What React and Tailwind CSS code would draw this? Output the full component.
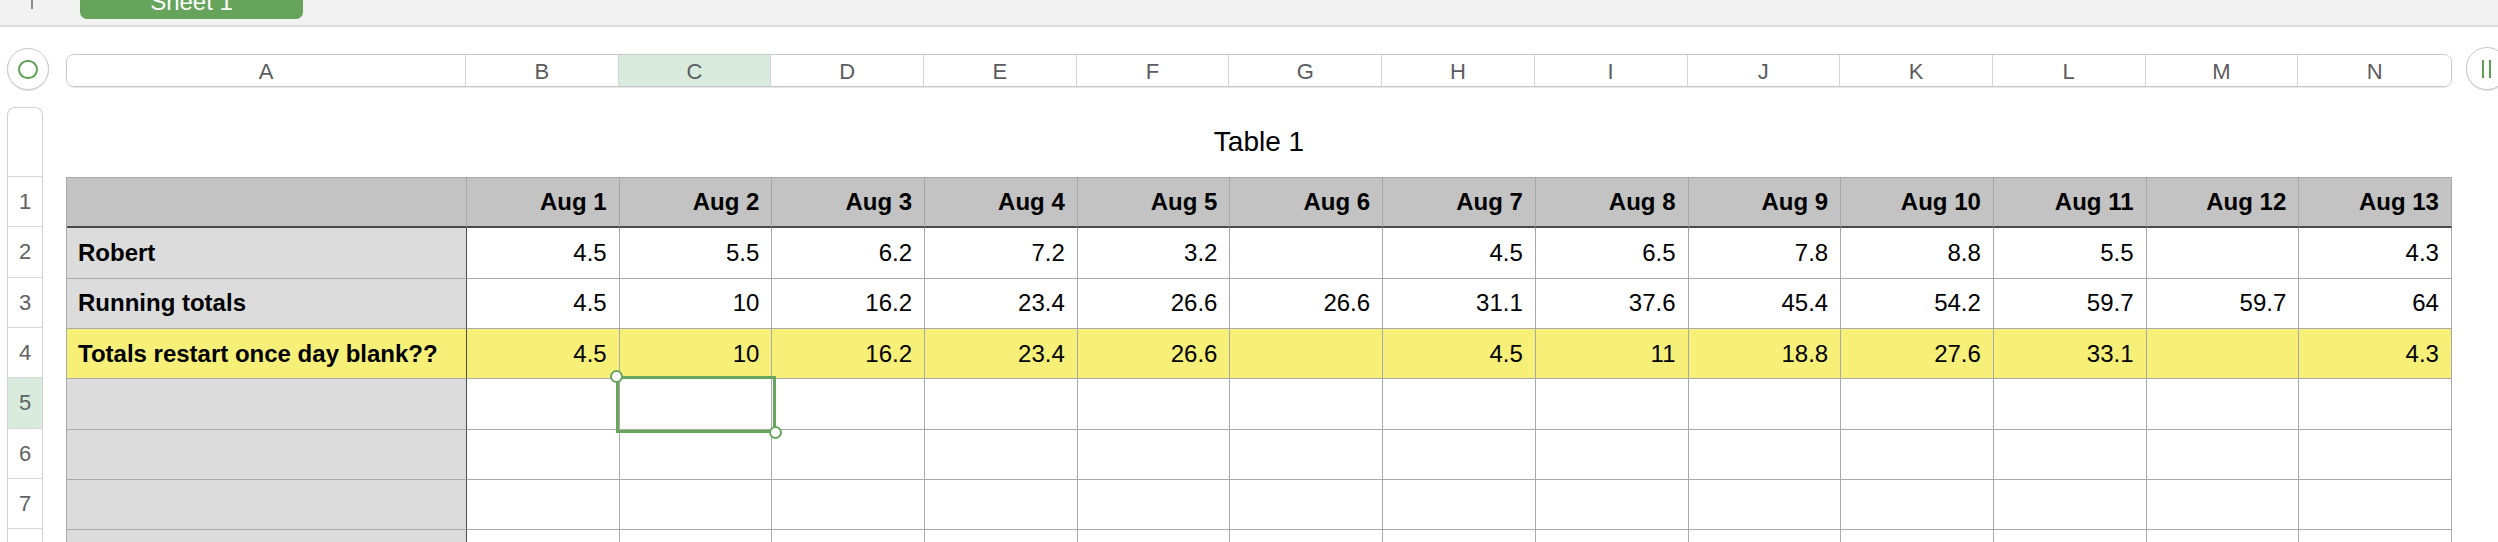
import React from "react";

const cols = ["A", "B", "C", "D", "E", "F", "G", "H", "I", "J", "K", "L", "M", "N"];
const days = Array.from({ length: 13 }, (_, i) => `Aug ${i + 1}`);

const rows = [
  { label: "Robert", values: ["4.5", "5.5", "6.2", "7.2", "3.2", "", "4.5", "6.5", "7.8", "8.8", "5.5", "", "4.3"] },
  { label: "Running totals", values: ["4.5", "10", "16.2", "23.4", "26.6", "26.6", "31.1", "37.6", "45.4", "54.2", "59.7", "59.7", "64"] },
  { label: "Totals restart once day blank??", values: ["4.5", "10", "16.2", "23.4", "26.6", "", "4.5", "11", "18.8", "27.6", "33.1", "", "4.3"], yellow: true },
  { label: "", values: Array(13).fill("") },
  { label: "", values: Array(13).fill("") },
  { label: "", values: Array(13).fill("") },
  { label: "", values: Array(13).fill("") },
];

function TopBar() {
  return (
    <div className="h-[27px] bg-[#f2f2f2] border-b-2 border-[#dcdcdc] flex items-start">
      <div className="ml-[31px] w-[2px] h-[9px] bg-[#8a8a8a]" />
      <div className="ml-[47px] w-[223px] h-[19px] bg-[#66a35b] rounded-b-[7px] overflow-hidden flex justify-center">
        <span className="text-[24px] leading-[24px] mt-[-10px] text-white">Sheet 1</span>
      </div>
    </div>
  );
}

function ColumnBar() {
  return (
    <div className="flex items-start mt-[21px] pl-[7px]">
      <div className="w-[42px] h-[42px] shrink-0 rounded-full border-[1.5px] border-[#c9c9c9] shadow-[0_1px_1px_rgba(0,0,0,0.12)] flex items-center justify-center bg-white">
        <div className="w-[20px] h-[19px] rounded-full border-[2.5px] border-[#5d9f53]" />
      </div>
      <div className="ml-[17px] mt-[6px] h-[33px] shrink-0 rounded-[8px] border-[1.5px] border-[#c8c8c8] shadow-[0_1px_1px_rgba(0,0,0,0.1)] overflow-hidden grid grid-cols-[399px_repeat(13,152.7px)]">
        {cols.map((c, i) => (
          <div
            key={c}
            className={
              "flex items-center justify-center text-[22px] text-[#5c5c60] border-[#d4d4d4] " +
              (i < cols.length - 1 ? "border-r " : "") +
              (c === "C" ? "bg-[#d8ebdc]" : "bg-white")
            }
          >
            {c}
          </div>
        ))}
      </div>
      <div className="ml-[14px] mt-[-1px] w-[42px] h-[43px] shrink-0 rounded-full border-[1.5px] border-[#c9c9c9] shadow-[0_1px_1px_rgba(0,0,0,0.12)] flex items-center gap-[5px] pl-[15px] bg-white">
        <div className="w-[2px] h-[18px] bg-[#5d9f53]" />
        <div className="w-[2px] h-[18px] bg-[#5d9f53]" />
      </div>
    </div>
  );
}

function RowHeader() {
  const nums = [1, 2, 3, 4, 5, 6, 7, 8];
  return (
    <div className="ml-[7px] w-[36px] shrink-0 border border-b-0 border-[#d2d2d2] rounded-t-[8px] overflow-hidden">
      <div className="h-[69px] border-b border-[#d6d6d6]" />
      {nums.map((n) => (
        <div
          key={n}
          className={
            "h-[50.33px] border-b border-[#d6d6d6] flex items-center justify-center text-[22px] text-[#626266] " +
            (n === 5 ? "bg-[#d8ebdc]" : "bg-white")
          }
        >
          {n <= 7 ? n : ""}
        </div>
      ))}
    </div>
  );
}

function Table() {
  return (
    <div className="ml-[23px] shrink-0 flex flex-col">
      <div className="h-[70px] flex items-center justify-center text-[28px] text-black">Table 1</div>
      <div className="relative border-t border-l border-[#a9a9a9] grid grid-cols-[400px_repeat(13,152.7px)] auto-rows-[50.33px] text-[24px] text-black">
        <div className="bg-[#c2c3c2] border-r border-b-2 border-r-[#a6a6a6] border-b-[#4a4a4a]" />
        {days.map((d) => (
          <div
            key={d}
            className="bg-[#c2c3c2] border-r border-b-2 border-r-[#a6a6a6] border-b-[#4a4a4a] flex items-center justify-end pr-[12px] font-bold"
          >
            {d}
          </div>
        ))}
        {rows.map((r, ri) => (
          <React.Fragment key={ri}>
            <div
              className={
                "border-r border-b border-r-[#4d4d4d] border-b-[#a9a9a9] flex items-center pl-[11px] font-bold " +
                (r.yellow ? "bg-[#f6f078]" : "bg-[#dcdcdc]")
              }
            >
              {r.label}
            </div>
            {r.values.map((v, vi) => (
              <div
                key={vi}
                className={
                  "border-r border-b border-[#a9a9a9] flex items-center justify-end pr-[12px] " +
                  (r.yellow ? "bg-[#f6f078]" : "bg-white")
                }
              >
                {v}
              </div>
            ))}
          </React.Fragment>
        ))}
        <div className="absolute left-[549px] top-[198px] w-[160px] h-[57px] border-[3px] border-[#68a55c] pointer-events-none">
          <div className="absolute left-[-9px] top-[-9px] w-[13px] h-[13px] rounded-full bg-white border-2 border-[#68a55c]" />
          <div className="absolute right-[-9px] bottom-[-9px] w-[13px] h-[13px] rounded-full bg-white border-2 border-[#68a55c]" />
        </div>
      </div>
    </div>
  );
}

export default function App() {
  return (
    <div
      className="w-[2498px] h-[542px] overflow-hidden bg-white"
      style={{ fontFamily: '"Liberation Sans", Arial, Helvetica, sans-serif' }}
    >
      <TopBar />
      <ColumnBar />
      <div className="flex items-start mt-[17px]">
        <RowHeader />
        <Table />
      </div>
    </div>
  );
}
